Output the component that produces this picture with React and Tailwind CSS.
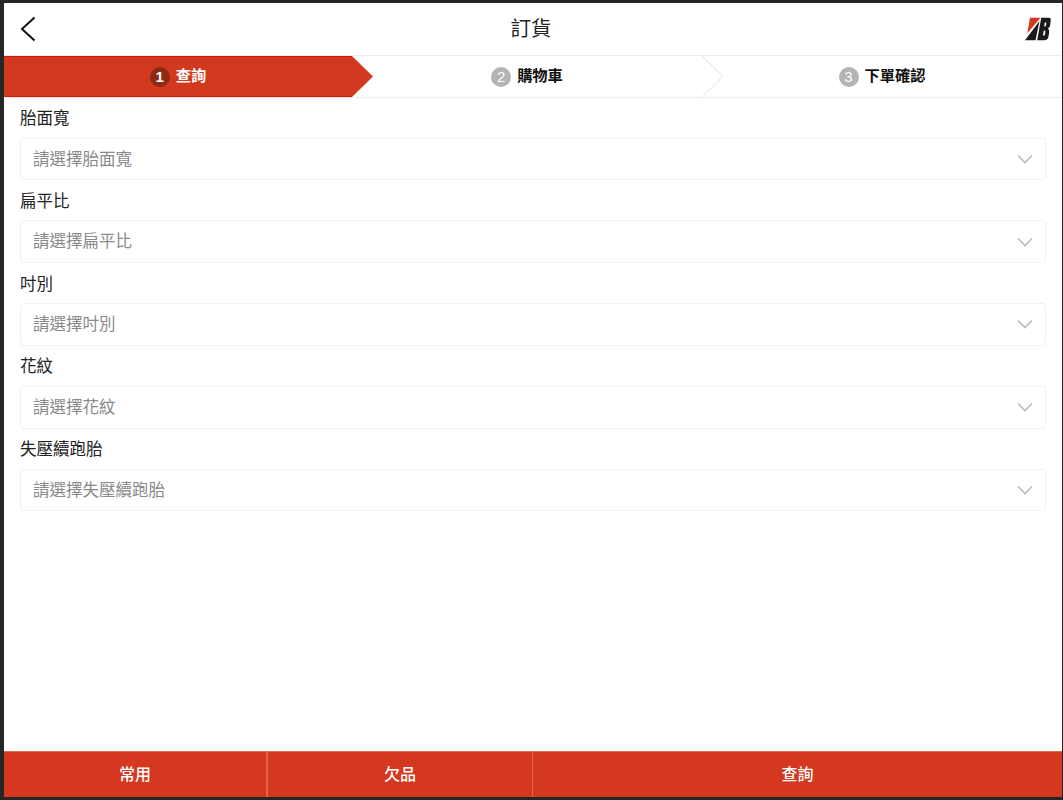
const FONT = '"Liberation Sans", "Noto Sans CJK TC", sans-serif'

const FIELDS = [
  { label: '胎面寬', placeholder: '請選擇胎面寬' },
  { label: '扁平比', placeholder: '請選擇扁平比' },
  { label: '吋別', placeholder: '請選擇吋別' },
  { label: '花紋', placeholder: '請選擇花紋' },
  { label: '失壓續跑胎', placeholder: '請選擇失壓續跑胎' },
]

function Logo() {
  return (
    <svg width="26" height="24" viewBox="0 0 26 24" className="block">
      <path d="M5 0.7 H15.5 L2.2 16.5 Z" fill="#d63a1e" />
      <path d="M0 23.3 L14.5 4 L10.5 23.3 Z" fill="#1a1a1a" />
      <path
        fillRule="evenodd"
        d="M16.2 0.7 H24 Q26 0.7 25.7 3.5 L25.2 8 Q24.9 10.4 23 11.6 Q24.5 12.8 24.1 15.5 L23.6 19 Q23 23.3 19 23.3 H12.2 Z M19.8 5.5 L19.2 9.5 H20 Q20.8 9.5 21 8.6 L21.3 6.6 Q21.4 5.5 20.6 5.5 Z M18.8 13.6 L18 18.6 H18.9 Q19.7 18.6 19.9 17.7 L20.3 15 Q20.4 13.6 19.6 13.6 Z"
        fill="#1a1a1a"
      />
    </svg>
  )
}

function Step({ num, label, active, className }) {
  return (
    <div className={`flex items-center justify-center gap-[6px] ${className}`}>
      <span
        className={`flex h-5 w-5 items-center justify-center rounded-full text-[15px] leading-none text-white ${
          active ? 'bg-[#8f2a16] font-bold' : 'bg-[#b4b4b4]'
        }`}
      >
        {num}
      </span>
      <span className={`text-[15.25px] font-bold ${active ? 'text-white' : 'text-[#111]'}`}>{label}</span>
    </div>
  )
}

function Field({ label, placeholder }) {
  return (
    <div className="h-[82.75px] px-4">
      <div className="flex h-[39.5px] items-center pt-[1px] text-[16.5px] leading-none text-[#222]">{label}</div>
      <div className="flex h-[42.75px] items-center justify-between rounded-[3px] border border-[#f2f2f2] pl-[12px] pr-[12px] text-[16.5px] text-[#8a8a8a]">
        <span>{placeholder}</span>
        <svg width="16" height="10" viewBox="0 0 16 10" fill="none" stroke="#bbbbbb" strokeWidth="1.6">
          <path d="M1 1.5 L8 8.5 L15 1.5" />
        </svg>
      </div>
    </div>
  )
}

export default function App() {
  return (
    <div
      className="flex h-screen flex-col overflow-hidden bg-[#262626] pb-[3px] pl-[4px] pr-[1px] pt-[3px]"
      style={{ fontFamily: FONT }}
    >
      <div className="flex flex-1 flex-col bg-white">
        <header className="flex h-[52px] shrink-0 items-center justify-between pl-[15px] pr-[11px]">
          <svg width="18" height="26" viewBox="0 0 18 26" fill="none" stroke="#111" strokeWidth="2">
            <path d="M15.5 1.5 L3 13 L15.5 24.5" />
          </svg>
          <h1 className="text-[20.5px] font-normal text-[#222]">訂貨</h1>
          <Logo />
        </header>

        <nav className="relative flex h-[43px] shrink-0 border-y border-[#ececec]">
          <Step num="1" label="查詢" active className="w-[348px] border-y border-[#d8140a] bg-[#d23a1f]" />
          <Step num="2" label="購物車" className="w-[350px]" />
          <Step num="3" label="下單確認" className="flex-1" />
          <svg
            width="22"
            height="41"
            viewBox="0 0 22 41"
            className="absolute left-[348px] top-0"
          >
            <path d="M0 0 L21 20.5 L0 41 Z" fill="#d23a1f" />
          </svg>
          <svg
            width="22"
            height="41"
            viewBox="0 0 22 41"
            fill="none"
            stroke="#e2e2e2"
            className="absolute left-[698px] top-0"
          >
            <path d="M0 0 L21 20.5 L0 41" />
          </svg>
        </nav>

        <main className="flex-1">
          {FIELDS.map((f) => (
            <Field key={f.label} label={f.label} placeholder={f.placeholder} />
          ))}
        </main>

        <footer className="flex h-[46px] shrink-0 border-t border-[#dc6a54] bg-[#d4391f] text-base font-medium text-white">
          <button type="button" className="w-[264px] border-r-2 border-[#de6650]">
            常用
          </button>
          <button type="button" className="w-[265px] border-r border-[#de6650]">
            欠品
          </button>
          <button type="button" className="flex-1">
            查詢
          </button>
        </footer>
      </div>
    </div>
  )
}
